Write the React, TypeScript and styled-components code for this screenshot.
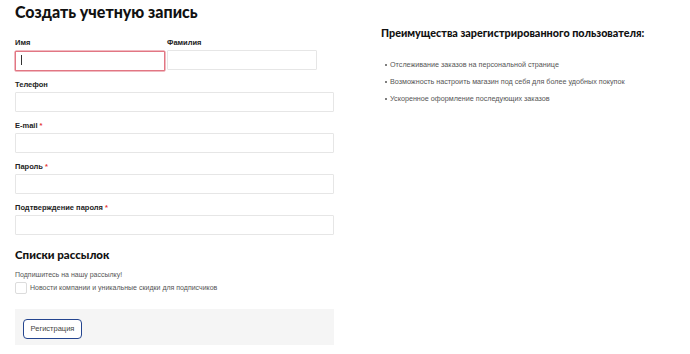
import React from 'react'
import styled, { createGlobalStyle } from 'styled-components'

const GlobalStyle = createGlobalStyle`
  html, body {
    margin: 0;
    padding: 0;
    background: #fff;
  }
  body {
    font-family: "Liberation Sans", Arial, sans-serif;
    color: #222;
  }
`

const Page = styled.div`
  display: flex;
  gap: 47px;
  padding: 0 0 0 15px;
  width: 690px;
  height: 354px;
  box-sizing: border-box;
  overflow: hidden;
`

const LeftColumn = styled.div`
  width: 319px;
  display: flex;
  flex-direction: column;
`

const Title = styled.h1`
  margin: 0 0 12px;
  font-family: Lato, "Noto Sans", sans-serif;
  font-weight: 900;
  font-size: 16px;
  line-height: 24px;
  color: #111;
`

const FieldRow = styled.div`
  display: flex;
  gap: 2px;
`

const Field = styled.div<{ $width?: number }>`
  display: flex;
  flex-direction: column;
  width: ${(p) => (p.$width ? `${p.$width}px` : '100%')};
  margin-bottom: 7px;
`

const Label = styled.label`
  font-size: 7.5px;
  font-weight: bold;
  line-height: 14px;
  color: #222;
`

const Star = styled.span`
  color: #e53935;
  margin-left: 2px;
`

const Input = styled.input<{ $active?: boolean }>`
  box-sizing: border-box;
  height: 20px;
  width: 100%;
  margin: 0;
  padding: 0 6px;
  border: 1px solid ${(p) => (p.$active ? '#e27683' : '#e6e6e6')};
  box-shadow: ${(p) => (p.$active ? '0 0 0 0.5px #e27683' : 'none')};
  border-radius: 1px;
  outline: none;
  background: #fff;
  font-size: 9px;
`

const Caret = styled.span`
  display: block;
  position: absolute;
  left: 6px;
  top: 5px;
  width: 1px;
  height: 10px;
  background: #333;
`

const ActiveWrap = styled.div`
  position: relative;
`

const SectionTitle = styled.h2`
  margin: 4px 0 6px;
  font-family: Lato, "Noto Sans", sans-serif;
  font-weight: 900;
  font-size: 11.5px;
  line-height: 18px;
  color: #111;
`

const Note = styled.p`
  margin: 0;
  font-size: 7px;
  line-height: 10px;
  color: #555;
`

const CheckRow = styled.label`
  display: flex;
  align-items: center;
  gap: 3px;
  margin-top: 2px;
  font-size: 7px;
  color: #555;
  line-height: 12px;
`

const Checkbox = styled.span`
  width: 10px;
  height: 10px;
  border: 1px solid #dcdcdc;
  border-radius: 2px;
  background: #fff;
`

const Actions = styled.div`
  margin-top: 15px;
  background: #f5f5f5;
  padding: 8px;
  height: 20px;
`

const Button = styled.button`
  box-sizing: border-box;
  height: 20px;
  width: 59px;
  padding: 0;
  border: 1.5px solid #24458f;
  border-radius: 4px;
  background: #fff;
  font-family: "Liberation Sans", Arial, sans-serif;
  font-size: 7.5px;
  color: #444;
`

const RightColumn = styled.div`
  padding-top: 26px;
  width: 300px;
`

const AsideTitle = styled.h3`
  margin: 0 0 16px;
  font-family: Lato, "Noto Sans", sans-serif;
  font-weight: 900;
  font-size: 10.8px;
  line-height: 14px;
  color: #111;
`

const Benefits = styled.ul`
  margin: 0;
  padding: 0 0 0 9px;
  list-style: none;
`

const Benefit = styled.li`
  position: relative;
  font-size: 7.2px;
  line-height: 17px;
  color: #555;

  &::before {
    content: "";
    position: absolute;
    left: -5px;
    top: 8px;
    width: 2px;
    height: 2px;
    border-radius: 50%;
    background: #555;
  }
`

const benefits = [
  'Отслеживание заказов на персональной странице',
  'Возможность настроить магазин под себя для более удобных покупок',
  'Ускоренное оформление последующих заказов',
]

const fields = [
  { label: 'Телефон', required: false, type: 'tel' },
  { label: 'E-mail', required: true, type: 'email' },
  { label: 'Пароль', required: true, type: 'password' },
  { label: 'Подтверждение пароля', required: true, type: 'password' },
]

export default function App() {
  return (
    <>
      <GlobalStyle />
      <Page>
        <LeftColumn>
          <Title>Создать учетную запись</Title>
          <FieldRow>
            <Field $width={150}>
              <Label>Имя</Label>
              <ActiveWrap>
                <Input $active />
                <Caret />
              </ActiveWrap>
            </Field>
            <Field $width={150}>
              <Label>Фамилия</Label>
              <Input />
            </Field>
          </FieldRow>
          {fields.map((f) => (
            <Field key={f.label}>
              <Label>
                {f.label}
                {f.required && <Star>*</Star>}
              </Label>
              <Input type={f.type} />
            </Field>
          ))}
          <SectionTitle>Списки рассылок</SectionTitle>
          <Note>Подпишитесь на нашу рассылку!</Note>
          <CheckRow>
            <Checkbox />
            Новости компании и уникальные скидки для подписчиков
          </CheckRow>
          <Actions>
            <Button>Регистрация</Button>
          </Actions>
        </LeftColumn>
        <RightColumn>
          <AsideTitle>Преимущества зарегистрированного пользователя:</AsideTitle>
          <Benefits>
            {benefits.map((b) => (
              <Benefit key={b}>{b}</Benefit>
            ))}
          </Benefits>
        </RightColumn>
      </Page>
    </>
  )
}
